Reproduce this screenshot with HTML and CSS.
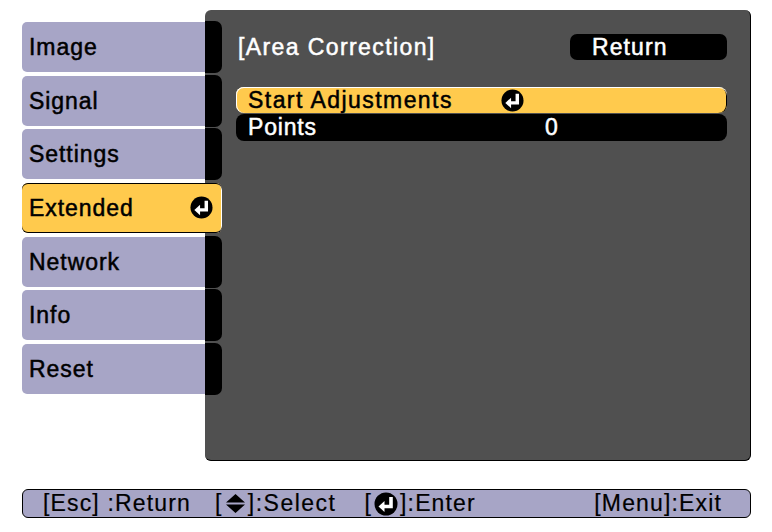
FILE: index.html
```html
<!DOCTYPE html>
<html lang="en">
<head>
  <meta charset="UTF-8" />
  <meta name="viewport" content="width=device-width, initial-scale=1.0"/>
  <title>Area Correction</title>
  <link rel="stylesheet" href="styles.css">
</head>
<body>

<svg class="icon-defs" width="0" height="0">
  <symbol id="enter" viewBox="0 0 24 24">
    <circle cx="12" cy="12" r="11.5" fill="#000"/>
    <path d="M17 5v9.5h-8" fill="none" stroke="#fff" stroke-width="3.6"/>
    <path d="M4.5 14.5l6-5.5v11z" fill="#fff"/>
  </symbol>
</svg>

<div class="screen">
  <div class="tabs">
    <div class="tab"><span class="tab-label">Image</span><span class="tab-end"></span></div>
    <div class="tab"><span class="tab-label">Signal</span><span class="tab-end"></span></div>
    <div class="tab"><span class="tab-label">Settings</span><span class="tab-end"></span></div>
    <div class="tab tab-active">
      <span class="tab-label">Extended</span>
      <svg class="enter-icon"><use href="#enter"/></svg>
    </div>
    <div class="tab"><span class="tab-label">Network</span><span class="tab-end"></span></div>
    <div class="tab"><span class="tab-label">Info</span><span class="tab-end"></span></div>
    <div class="tab"><span class="tab-label">Reset</span><span class="tab-end"></span></div>
  </div>

  <div class="panel">
    <div class="panel-head">
      <div class="panel-title">[Area Correction]</div>
      <div class="return-btn">Return</div>
    </div>
    <div class="row row-active">
      <span class="row-label">Start Adjustments</span>
      <svg class="enter-icon"><use href="#enter"/></svg>
    </div>
    <div class="row">
      <span class="row-label">Points</span>
      <span class="row-value">0</span>
    </div>
  </div>
</div>

<div class="help-bar">
  <span class="help-item">[Esc] :Return</span>
  <span class="help-item help-select">[<svg class="updown" viewBox="0 0 18 18"><path d="M9 0l9 8H0zM0 10h18l-9 8z" fill="#000"/></svg>]:Select</span>
  <span class="help-item help-enter">[<svg class="enter-icon small"><use href="#enter"/></svg>]:Enter</span>
  <span class="help-item help-exit">[Menu]:Exit</span>
</div>

</body>
</html>
```

FILE: styles.css
```css
body {
  margin: 0;
  background: #fff;
  color: #000;
  font-family: "Liberation Sans", Arial, sans-serif;
  font-size: 23px;
  letter-spacing: 0.95px;
  padding: 10px 20px 0 22px;
  -webkit-text-stroke: 0.5px;
}
.icon-defs {
  position: absolute;
}
.screen {
  display: flex;
  align-items: flex-start;
}
.tabs {
  width: 200px;
  margin-top: 12px;
  margin-right: -17px;
  display: flex;
  flex-direction: column;
  gap: 3.67px;
  position: relative;
}
.tab {
  height: 50px;
  display: flex;
  align-items: stretch;
}
.tab-label {
  width: 183px;
  box-sizing: border-box;
  padding: 12px 0 0 7px;
  background: #a7a5c6;
  border-radius: 5px 0 0 5px;
}
.tab-end {
  width: 17px;
  margin: -1px 0;
  background: #000;
  border-radius: 0 7px 7px 0;
}
.tab-active {
  background: #ffca4d;
  border-radius: 6px;
  box-shadow: inset 0 1px 0 #000, inset 0 -1px 0 #000, inset -1px 0 0 #fff;
  align-items: center;
}
.tab-active .tab-label {
  background: none;
  align-self: stretch;
  width: 168px;
}
.panel {
  width: 546px;
  height: 451px;
  box-sizing: border-box;
  background: #505050;
  border-right: 1px solid #000;
  border-bottom: 1px solid #000;
  border-radius: 6px;
  padding: 24px 23px 0 31px;
  color: #fff;
}
.panel-head {
  display: flex;
  justify-content: space-between;
  align-items: center;
  height: 26px;
  margin-bottom: 27px;
}
.panel-title {
  margin-left: 2px;
  letter-spacing: 1.4px;
}
.return-btn {
  width: 157px;
  height: 26px;
  box-sizing: border-box;
  padding-left: 22px;
  line-height: 26px;
  background: #000;
  border-radius: 7px;
  letter-spacing: 1.1px;
}
.row {
  height: 27px;
  display: flex;
  align-items: center;
  background: #000;
  border-radius: 8px;
  padding-left: 12px;
  letter-spacing: 0.8px;
}
.row-active {
  height: 26px;
  margin-bottom: 1px;
  background: #ffca4d;
  color: #000;
  letter-spacing: 1.45px;
  box-shadow: inset 0 1px 0 #fff, inset 1px 0 0 #fff, inset -1px 0 0 #000;
}
.row-label {
  width: 253px;
}
.row-value {
  margin-left: 44px;
}
.enter-icon {
  width: 23px;
  height: 23px;
  display: block;
}
.help-bar {
  margin-top: 28px;
  width: 729px;
  height: 29px;
  box-sizing: border-box;
  display: flex;
  align-items: center;
  padding: 0 28px 0 20px;
  background: #a7a5c6;
  border: 1px solid #000;
  border-radius: 6px;
  letter-spacing: 1.15px;
  -webkit-text-stroke: 0.2px;
}
.help-item {
  display: flex;
  align-items: center;
  white-space: pre;
}
.help-select {
  margin-left: 24px;
  letter-spacing: 1.5px;
}
.help-enter {
  margin-left: 28px;
}
.help-exit {
  margin-left: auto;
}
.updown {
  width: 19px;
  height: 19px;
  margin: 0 3px;
}
.small {
  width: 24px;
  height: 24px;
  margin: 0 2px;
}
```
